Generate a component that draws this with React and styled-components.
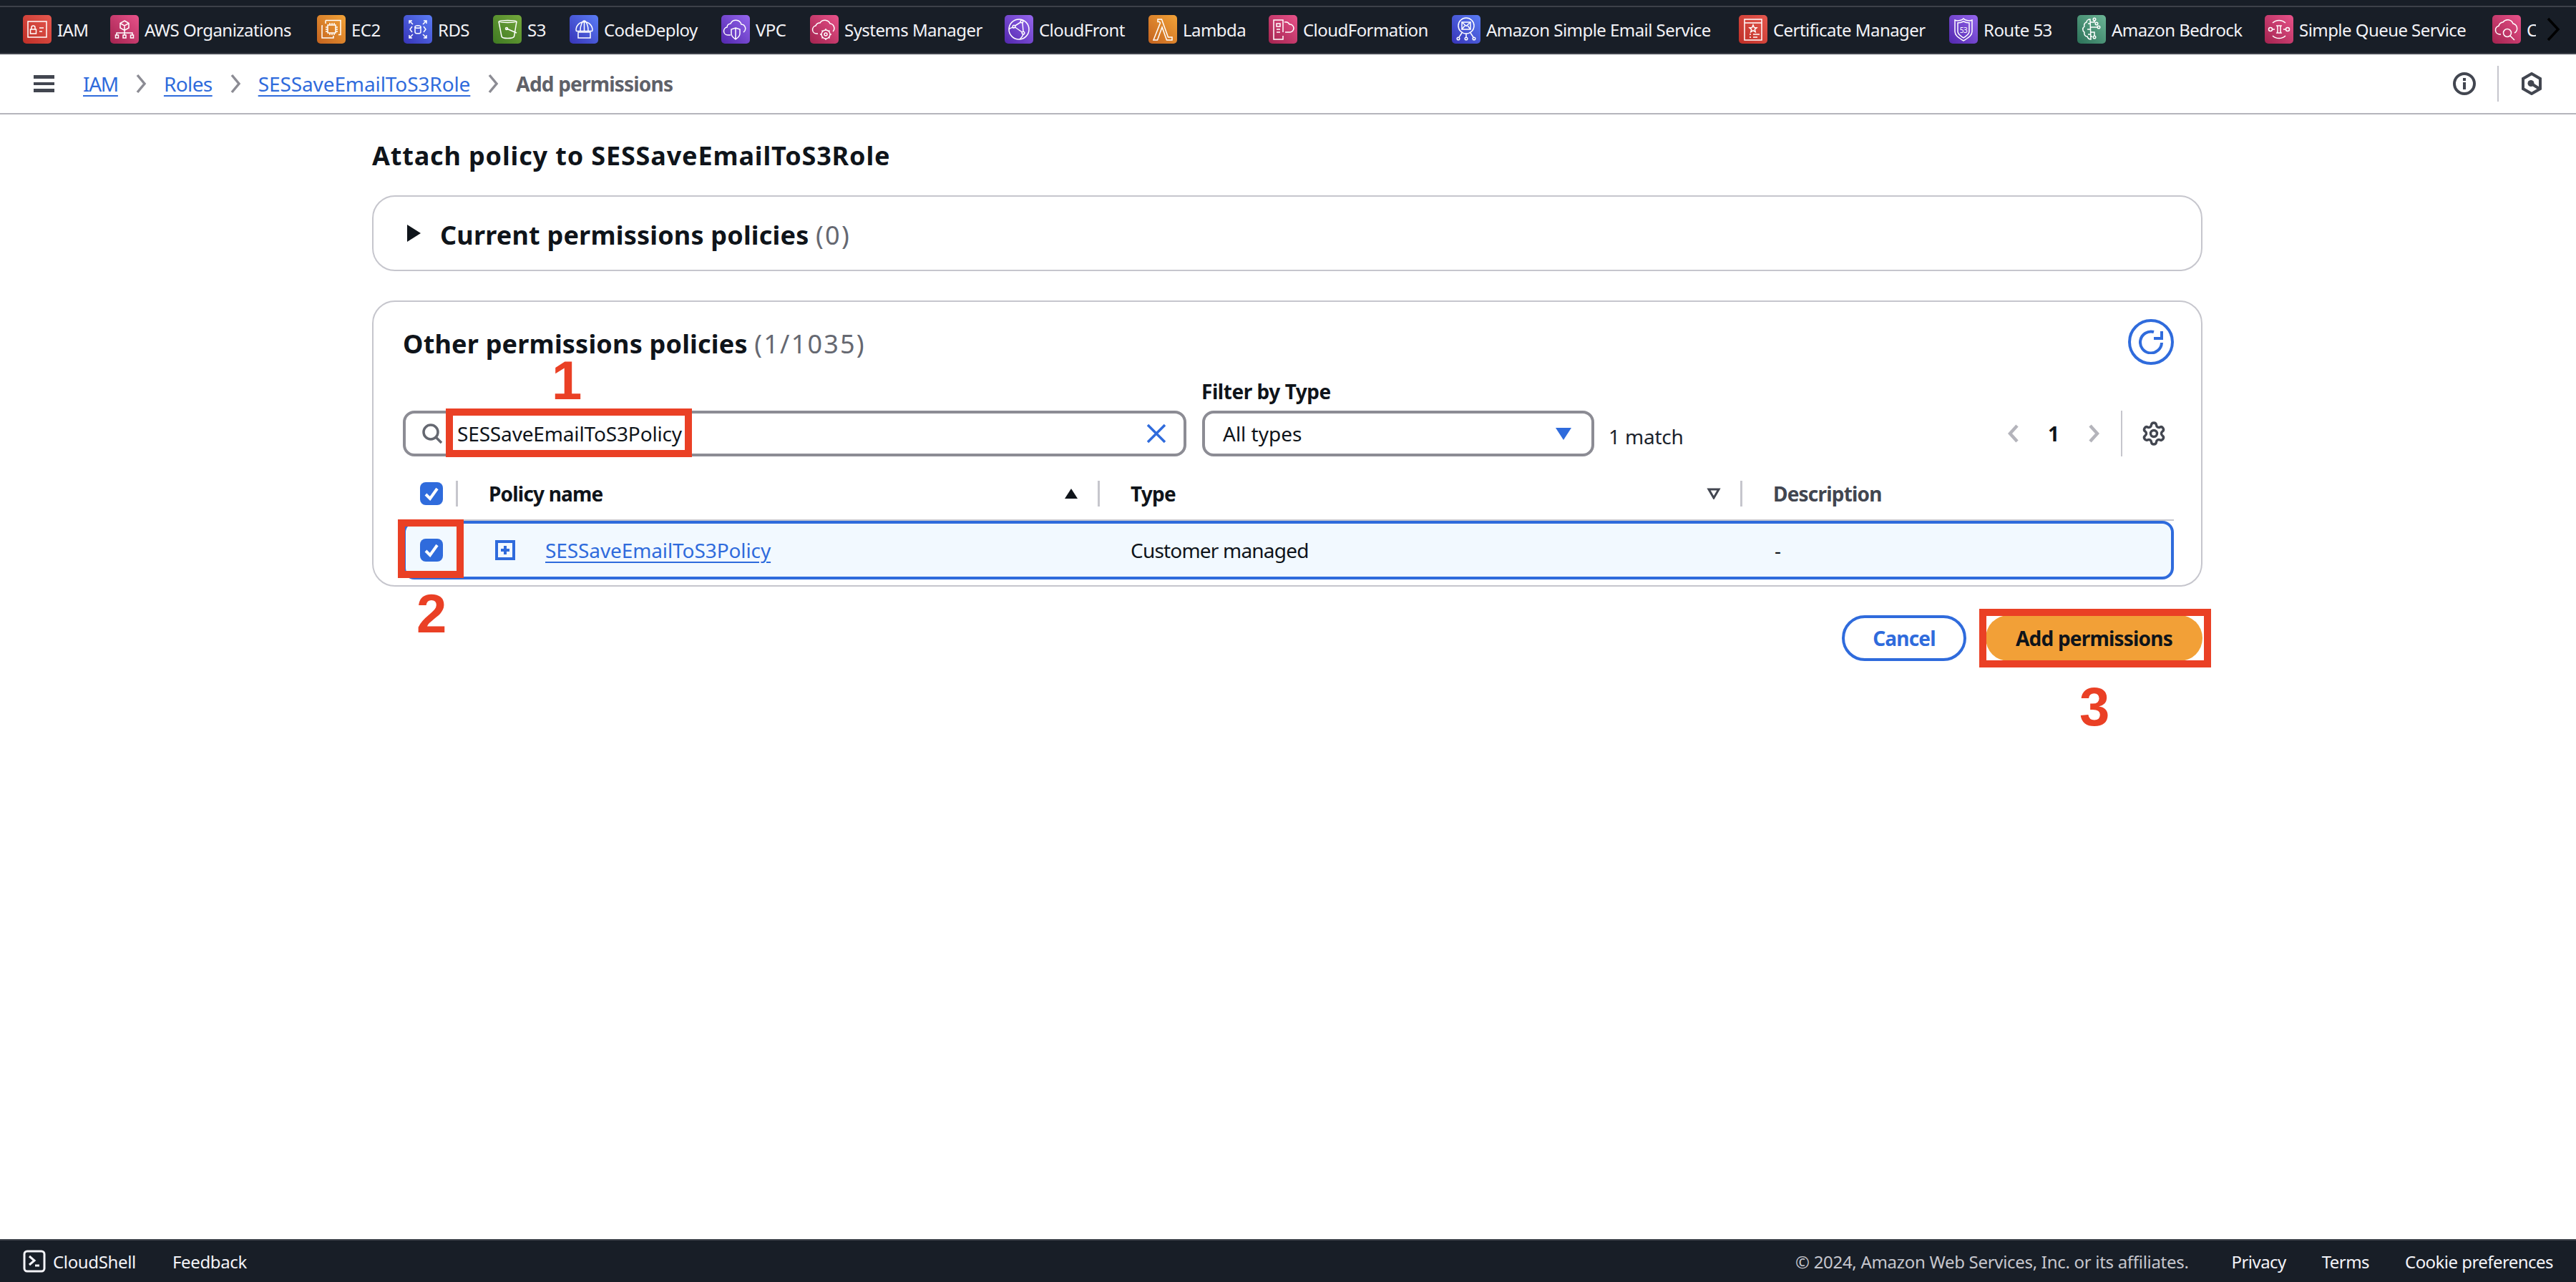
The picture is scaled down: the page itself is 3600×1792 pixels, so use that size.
import React from 'react';
import styled, { createGlobalStyle } from 'styled-components';
import { Settings } from 'lucide-react';

const GlobalStyle = createGlobalStyle`
  html, body { margin: 0; padding: 0; background: #fff; }
  * { box-sizing: border-box; }
  body { font-family: 'Noto Sans', Arial, sans-serif; color: #0f141a; }
`;

const BLUE = '#2f6bdc';

const Page = styled.div`
  width: 3600px;
  height: 1792px;
  display: flex;
  flex-direction: column;
  overflow: hidden;
  background: #fff;
`;

const ServicesBar = styled.div`
  height: 76px;
  flex: none;
  display: flex;
  align-items: center;
  padding: 8px 22px 0 32px;
  background: #181e27;
  border-bottom: 2px solid #41454d;
  position: relative;
  &::before {
    content: '';
    position: absolute;
    left: 0;
    right: 0;
    top: 8px;
    height: 2px;
    background: #3d4149;
  }
`;

const ServiceList = styled.div`
  flex: 1;
  display: flex;
  gap: 32px;
  overflow: hidden;
`;

const ServiceItem = styled.a`
  flex: none;
  width: ${(p) => p.$w}px;
  display: flex;
  align-items: center;
  gap: 8px;
  color: #f3f3f7;
  font-size: 24px;
  letter-spacing: -0.55px;
  white-space: nowrap;
  &:last-child {
    overflow: hidden;
  }
`;

const MoreChevron = styled.svg`
  width: 20px;
  height: 34px;
  flex: none;
  margin-left: 8px;
`;

const NavBar = styled.div`
  height: 84px;
  flex: none;
  display: flex;
  align-items: center;
  padding: 0 47px 0 47px;
  border-bottom: 2px solid #b4b4bb;
`;

const Hamburger = styled.div`
  width: 29px;
  height: 24px;
  margin-right: 40px;
  border-top: 5px solid #424650;
  border-bottom: 5px solid #424650;
  position: relative;
  &::after {
    content: '';
    position: absolute;
    left: 0;
    right: 0;
    top: 5px;
    height: 4px;
    background: #424650;
  }
`;

const Crumbs = styled.div`
  flex: 1;
  display: flex;
  align-items: center;
  font-size: 28px;
`;

const CrumbLink = styled.a`
  color: ${BLUE};
  letter-spacing: ${(p) => p.$track}px;
  text-decoration: underline;
  text-decoration-thickness: 2px;
  text-underline-offset: 5px;
`;

const CrumbSep = styled.svg`
  width: 16px;
  height: 28px;
  margin: 0 24px;
`;

const CrumbCurrent = styled.span`
  color: #5f6169;
  font-weight: 700;
  letter-spacing: -0.8px;
`;

const NavIcons = styled.div`
  display: flex;
  align-items: center;
`;

const NavDivider = styled.div`
  width: 2px;
  height: 50px;
  background: #c6c6cd;
  margin: 0 31px 0 30px;
`;

const Main = styled.main`
  flex: 1;
  width: 2558px;
  margin-left: 520px;
  padding-top: 35px;
`;

const PageTitle = styled.h1`
  margin: 0 0 34px;
  height: 44px;
  line-height: 46px;
  font-size: 36px;
  font-weight: 700;
  letter-spacing: 0.85px;
`;

const Card = styled.section`
  border: 2px solid #c6c6cd;
  border-radius: 32px;
  background: #fff;
`;

const CollapsedCard = styled(Card)`
  height: 106px;
  margin-bottom: 41px;
  display: flex;
  align-items: center;
  padding-left: 47px;
  gap: 27px;
`;

const Caret = styled.div`
  width: 0;
  height: 0;
  border-left: 19px solid #0f141a;
  border-top: 12px solid transparent;
  border-bottom: 12px solid transparent;
`;

const CardTitle = styled.h2`
  margin: 0;
  padding-top: 5px;
  font-size: 36px;
  line-height: 44px;
  font-weight: 700;
  letter-spacing: 0.2px;
  & > span {
    font-weight: 400;
    letter-spacing: 2.2px;
    color: #656871;
  }
`;

const PolicyCard = styled(Card)`
  height: 400px;
  padding: 24px 38px 0 41px;
`;

const CardHeader = styled.div`
  height: 64px;
  display: flex;
  align-items: center;
  justify-content: space-between;
`;

const RefreshButton = styled.div`
  width: 64px;
  height: 64px;
  border: 4px solid ${BLUE};
  border-radius: 50%;
  display: flex;
  align-items: center;
  justify-content: center;
`;

const Toolbar = styled.div`
  height: 128px;
  display: flex;
  align-items: flex-end;
`;

const Field = styled.div`
  height: 64px;
  border: 4px solid #8c8c94;
  border-radius: 16px;
  display: flex;
  align-items: center;
  background: #fff;
  position: relative;
`;

const SearchField = styled(Field)`
  width: 1095px;
  padding: 0 24px 0 22px;
`;

const SearchText = styled.span`
  flex: 1;
  margin-left: 20px;
  font-size: 28px;
  letter-spacing: -0.15px;
  position: relative;
  z-index: 2;
`;

const FilterGroup = styled.div`
  margin-left: 22px;
  width: 548px;
`;

const FilterLabel = styled.label`
  display: block;
  height: 40px;
  margin-left: -1px;
  font-size: 28px;
  font-weight: 700;
  letter-spacing: -0.45px;
  line-height: 26px;
`;

const SelectField = styled(Field)`
  justify-content: space-between;
  padding: 0 28px 0 25px;
  font-size: 28px;
  color: #0f141a;
`;

const SelectCaret = styled.div`
  width: 0;
  height: 0;
  border-top: 17px solid ${BLUE};
  border-left: 11px solid transparent;
  border-right: 11px solid transparent;
`;

const MatchCount = styled.span`
  margin: 0 0 10px 20px;
  height: 36px;
  line-height: 36px;
  font-size: 28px;
  letter-spacing: -0.2px;
  flex: 1;
  color: #1b232d;
`;

const Pager = styled.div`
  height: 64px;
  display: flex;
  align-items: center;
  padding-right: 10px;
`;

const PageNumber = styled.span`
  width: 96px;
  text-align: center;
  font-size: 28px;
  font-weight: 700;
`;

const PagerDivider = styled.div`
  width: 2px;
  height: 64px;
  background: #c6c6cd;
  margin: 0 26px 0 30px;
`;

const columns = (css) => `grid-template-columns: ${css};`;

const TableHead = styled.div`
  display: grid;
  ${columns('77px 897px 898px 603px')}
  margin-top: 34px;
  padding-bottom: 18px;
  border-bottom: 2px solid #c6c6cd;
`;

const HeadCell = styled.div`
  height: 36px;
  display: flex;
  align-items: center;
  justify-content: space-between;
  padding: 0 27px 0 43px;
  font-size: 28px;
  font-weight: 700;
  letter-spacing: -0.8px;
  color: ${(p) => (p.$muted ? '#424650' : '#0f141a')};
  border-right: ${(p) => (p.$last ? 'none' : '3px solid #c6c6cd')};
`;

const CheckHead = styled(HeadCell)`
  padding: 0 0 0 24px;
`;

const Checkbox = styled.span`
  width: 32px;
  height: 32px;
  border-radius: 8px;
  background: ${BLUE};
  display: flex;
  align-items: center;
  justify-content: center;
`;

const PolicyRow = styled.div`
  display: grid;
  ${columns('73px 897px 898px 599px')}
  height: 82px;
  align-items: center;
  border: 4px solid ${BLUE};
  border-radius: 16px;
  background: #f2f9ff;
  font-size: 28px;
  position: relative;
`;

const RowCell = styled.div`
  display: flex;
  align-items: center;
  padding-left: ${(p) => p.$pad}px;
`;

const TypeCell = styled(RowCell)`
  letter-spacing: -0.8px;
`;

const PolicyLink = styled.a`
  margin-left: 42px;
  color: ${BLUE};
  letter-spacing: -0.1px;
  text-decoration: underline;
  text-decoration-thickness: 2px;
  text-underline-offset: 5px;
`;

const Actions = styled.div`
  margin-top: 40px;
  display: flex;
  justify-content: flex-end;
  gap: 27px;
`;

const PillButton = styled.button`
  height: 64px;
  width: ${(p) => p.$w}px;
  border-radius: 32px;
  font-family: inherit;
  font-size: 28px;
  font-weight: 700;
  letter-spacing: -0.8px;
  padding: 0;
  position: relative;
  border: ${(p) => (p.$primary ? 'none' : `4px solid ${BLUE}`)};
  background: ${(p) => (p.$primary ? '#f2a037' : '#fff')};
  color: ${(p) => (p.$primary ? '#0f141a' : BLUE)};
`;

const CalloutBox = styled.div`
  position: absolute;
  left: ${(p) => p.$x}px;
  top: ${(p) => p.$y}px;
  width: ${(p) => p.$w}px;
  height: ${(p) => p.$h}px;
  border: 10px solid #ea4025;
  pointer-events: none;
  z-index: 1;
`;

const CalloutNumber = styled.div`
  position: absolute;
  left: ${(p) => p.$x}px;
  top: ${(p) => p.$y}px;
  font-family: 'Liberation Sans', Arial, sans-serif;
  font-size: 76px;
  font-weight: 700;
  line-height: 76px;
  letter-spacing: 0;
  color: #ea4025;
  z-index: 3;
`;

const Footer = styled.footer`
  height: 60px;
  flex: none;
  display: flex;
  align-items: center;
  padding: 0 32px;
  background: #181e27;
  border-top: 2px solid #41454d;
  color: #f3f3f7;
  font-size: 24px;
  letter-spacing: -0.35px;
`;

const FooterLeft = styled.div`
  flex: 1;
  display: flex;
  align-items: center;
`;

const CloudShell = styled.span`
  display: flex;
  align-items: center;
  gap: 10px;
  margin-right: 51px;
`;

const Copyright = styled.span`
  color: #c6c6cd;
  letter-spacing: -0.3px;
  margin-right: 60px;
`;

const FooterLinks = styled.div`
  display: flex;
  gap: 50px;
  letter-spacing: -0.55px;
`;

const grads = {
  red: ['#bf2f27', '#e5584f'],
  pink: ['#a3234f', '#e8528a'],
  orange: ['#c4631f', '#f2a338'],
  blue: ['#3734b8', '#5a7df5'],
  green: ['#3f7a22', '#74a83c'],
  purple: ['#5227ad', '#9566ee'],
  teal: ['#2b7158', '#6cb596'],
};

const glyphs = {
  iam: (
    <>
      <rect x="7" y="9" width="26" height="22" />
      <rect x="10.500" y="20" width="8" height="6" />
      <path d="M12 20v-2.500a2.500 2.500 0 0 1 5 0V20M23 18h6M23 23h4" />
    </>
  ),
  org: (
    <>
      <path d="M20 8l6 3.500v6.500l-6 3.500-6-3.500v-6.500zM14 11.500l6 3.500 6-3.500M20 15v6.500M20 21.500V28M9 28v-3h22v3" />
      <rect x="7.500" y="28" width="4" height="4" />
      <rect x="18" y="28" width="4" height="4" />
      <rect x="28.500" y="28" width="4" height="4" />
    </>
  ),
  ec2: (
    <>
      <rect x="15" y="14" width="11" height="11" />
      <path d="M18 14v-3M21 14v-3M24 14v-3M18 25v3M21 25v3M24 25v3M15 17h-3M15 20h-3M15 23h-3M26 17h3M26 20h3M26 23h3" />
      <path d="M12 7.500h21v20h-3M12 7.500V12M8 15H7v17h16v-3" />
    </>
  ),
  rds: (
    <>
      <ellipse cx="20" cy="16.500" rx="4" ry="1.800" />
      <path d="M16 16.500v7.500c0 1 1.800 1.800 4 1.800s4-.8 4-1.800v-7.500" />
      <path d="M8 12V8h4M8 8l5 5M32 12V8h-4M32 8l-5 5M8 28v4h4M8 32l5-5M32 28v4h-4M32 32l-5-5" />
      <path d="M12 16l-3 4 3 4M28 16l3 4-3 4" />
    </>
  ),
  s3: (
    <>
      <path d="M8 9c3-2 22-2 25 0M8 9c3 2 22 2 25 0" />
      <path d="M8 9l4 21c.4 2 4 2.500 8.500 2.500S29 32 29.500 30L33 9M19 19l14 6" />
      <circle cx="19" cy="19" r="1.500" />
    </>
  ),
  deploy: (
    <>
      <path d="M9 21a11.500 11.500 0 0 1 23 0l-.5 1.500H9.500zM15 22c0-8 3-14 5.500-14s5.500 6 5.500 14M20.500 8v14" />
      <path d="M12 24h17v8H12z" />
    </>
  ),
  vpc: (
    <>
      <path d="M13 28H9a5.500 5.500 0 0 1-1-10.900A5.500 5.500 0 0 1 13 12a8 8 0 0 1 15 1 6 6 0 0 1 3 11" />
      <path d="M20 18l6 2v6c0 4-3 6-6 8-3-2-6-4-6-8v-6zM20 18v16" />
    </>
  ),
  ssm: (
    <>
      <path d="M11 26H9a5.500 5.500 0 0 1-1-10.900A6 6 0 0 1 14 11a8 8 0 0 1 14 1 6.500 6.500 0 0 1 4 11" />
      <circle cx="22" cy="27" r="6" />
      <circle cx="22" cy="27" r="2" />
      <path d="M22 19v2M22 33v2M14 27h2M28 27h2M16.500 21.500l1.500 1.500M26 31l1.500 1.500M27.500 21.500L26 23M18 31l-1.500 1.500" />
    </>
  ),
  front: (
    <>
      <circle cx="20" cy="20" r="14" />
      <circle cx="13" cy="16" r="1.800" />
      <circle cx="24" cy="9" r="1.800" />
      <circle cx="26" cy="25" r="1.800" />
      <path d="M14.500 15l8-5M14.500 17l10 7M25 11l1 12M6 20c3-3 5-3 7-2M21 34c3-3 5-5 5-8" />
    </>
  ),
  lambda: <path d="M13 6h5.500l9 25H33v4h-7.500L19 17l-6.500 18H7l9.500-24-1-1.500H13z" />,
  formation: (
    <>
      <path d="M20 24V7H7v27h13v-5" />
      <path d="M11 12h5v4h-5zM11 20h5M11 24h5M22 10a6 6 0 0 1 7 3 5.500 5.500 0 0 1 1 11h-7" />
    </>
  ),
  ses: (
    <>
      <circle cx="20" cy="15" r="11" />
      <rect x="14" y="10" width="12" height="10" />
      <path d="M14 10l6 5.500 6-5.500M14 20l4-5M26 20l-4-5M20 26v5M14 25l-4 6M26 25l4 6" />
      <circle cx="9" cy="33" r="1.800" />
      <circle cx="20" cy="33" r="1.800" />
      <circle cx="31" cy="33" r="1.800" />
    </>
  ),
  acm: (
    <>
      <rect x="8" y="6" width="24" height="29" />
      <path d="M8 11h24M20 14l1.500 3.500 3.500.3-2.700 2.300.9 3.600-3.200-2-3.200 2 .9-3.600-2.700-2.300 3.500-.3zM15 27h2M20 27h9M15 31h2M20 31h6" />
    </>
  ),
  route: (
    <>
      <path d="M20 5c2 2 5 3 9 3l3-1v16c0 6-6 9-12 13C14 32 8 29 8 23V7l3 1c4 0 7-1 9-3z" />
      <path d="M20 9c2 1 4 2 8 2v12c0 4-4 6-8 9-4-3-8-5-8-9V11c4 0 6-1 8-2z" />
      <text x="20" y="25" fontSize="10" textAnchor="middle" fill="#fff" stroke="none" fontFamily="'Noto Sans', sans-serif">53</text>
    </>
  ),
  bedrock: (
    <>
      <path d="M18 6c-3 0-5 2-5 4-3 1-4 4-3 6-3 2-3 6 0 8-1 3 1 6 4 6 1 3 3 4 5 4zM18 12h-3M18 20h-4M18 27h-3" />
      <path d="M18 10h6v-3M18 17h10M18 24h6v5M18 30h3" />
      <circle cx="24" cy="6" r="1.800" />
      <circle cx="30" cy="17" r="1.800" />
      <circle cx="27" cy="12" r="1.800" />
      <circle cx="24" cy="31" r="1.800" />
    </>
  ),
  sqs: (
    <>
      <path d="M11 11a13 13 0 0 1 18 0M11 29a13 13 0 0 0 18 0" />
      <path d="M17 15h6l-1 2v6l1 2h-6l1-2v-6z" />
      <circle cx="8" cy="20" r="2.500" />
      <circle cx="32" cy="20" r="2.500" />
      <path d="M11 20h3M26 20h3" />
    </>
  ),
  watch: (
    <>
      <path d="M12 27H10a6 6 0 0 1-1-11.800A7 7 0 0 1 15 10a8 8 0 0 1 14 2 7 7 0 0 1 2 13" />
      <circle cx="21" cy="25" r="5.500" />
      <path d="M25 29l6 6" />
    </>
  ),
};

const services = [
  { label: 'IAM', w: 90, color: 'red', glyph: 'iam' },
  { label: 'AWS Organizations', w: 257, color: 'pink', glyph: 'org' },
  { label: 'EC2', w: 89, color: 'orange', glyph: 'ec2' },
  { label: 'RDS', w: 93, color: 'blue', glyph: 'rds' },
  { label: 'S3', w: 75, color: 'green', glyph: 's3' },
  { label: 'CodeDeploy', w: 180, color: 'blue', glyph: 'deploy' },
  { label: 'VPC', w: 92, color: 'purple', glyph: 'vpc' },
  { label: 'Systems Manager', w: 240, color: 'pink', glyph: 'ssm' },
  { label: 'CloudFront', w: 169, color: 'purple', glyph: 'front' },
  { label: 'Lambda', w: 136, color: 'orange', glyph: 'lambda' },
  { label: 'CloudFormation', w: 224, color: 'pink', glyph: 'formation' },
  { label: 'Amazon Simple Email Service', w: 369, color: 'blue', glyph: 'ses' },
  { label: 'Certificate Manager', w: 262, color: 'red', glyph: 'acm' },
  { label: 'Route 53', w: 147, color: 'purple', glyph: 'route' },
  { label: 'Amazon Bedrock', w: 230, color: 'teal', glyph: 'bedrock' },
  { label: 'Simple Queue Service', w: 286, color: 'pink', glyph: 'sqs' },
  { label: 'CloudWatch', w: 61, color: 'pink', glyph: 'watch' },
];

const ServiceIcon = ({ id, color, glyph }) => (
  <svg width="40" height="40" viewBox="0 0 40 40" style={{ flex: 'none' }}>
    <defs>
      <linearGradient id={id} x1="0" y1="1" x2="1" y2="0">
        <stop offset="0" stopColor={grads[color][0]} />
        <stop offset="1" stopColor={grads[color][1]} />
      </linearGradient>
    </defs>
    <rect width="40" height="40" rx="5" fill={`url(#${id})`} />
    <g fill="none" stroke="#fff" strokeWidth="1.500">{glyphs[glyph]}</g>
  </svg>
);

const Chevron = ({ color = '#8c8c94' }) => (
  <CrumbSep viewBox="0 0 16 28">
    <path d="M3 2l10 12L3 26" fill="none" stroke={color} strokeWidth="3.500" />
  </CrumbSep>
);

const CheckMark = () => (
  <svg width="22" height="20" viewBox="0 0 22 20">
    <path d="M3 11l6 6L19 3" fill="none" stroke="#fff" strokeWidth="4" />
  </svg>
);

const SortDown = ({ filled }) => (
  <svg width="20" height="16" viewBox="0 0 20 16">
    {filled ? (
      <path d="M10 1l9 14H1z" fill="#0f141a" />
    ) : (
      <path d="M3 2h14l-7 12z" fill="none" stroke="#424650" strokeWidth="3" />
    )}
  </svg>
);

export default function App() {
  return (
    <Page>
      <GlobalStyle />
      <ServicesBar>
        <ServiceList>
          {services.map((s, i) => (
            <ServiceItem key={s.label} $w={s.w}>
              <ServiceIcon id={`svc${i}`} color={s.color} glyph={s.glyph} />
              <span>{s.label}</span>
            </ServiceItem>
          ))}
        </ServiceList>
        <MoreChevron viewBox="0 0 20 34">
          <path d="M3 2l14 15L3 32" fill="none" stroke="#000" strokeWidth="3.500" />
        </MoreChevron>
      </ServicesBar>

      <NavBar>
        <Hamburger />
        <Crumbs>
          <CrumbLink $track={-1.3}>IAM</CrumbLink>
          <Chevron />
          <CrumbLink $track={-0.6}>Roles</CrumbLink>
          <Chevron />
          <CrumbLink $track={-0.1}>SESSaveEmailToS3Role</CrumbLink>
          <Chevron />
          <CrumbCurrent>Add permissions</CrumbCurrent>
        </Crumbs>
        <NavIcons>
          <svg width="32" height="32" viewBox="0 0 32 32">
            <circle cx="16" cy="16" r="14" fill="none" stroke="#424650" strokeWidth="4" />
            <path d="M16 14v10M16 8v4" stroke="#424650" strokeWidth="4" />
          </svg>
          <NavDivider />
          <svg width="30" height="32" viewBox="0 0 30 32">
            <path d="M15 2l12 7v14l-12 7-12-7V9z" fill="none" stroke="#424650" strokeWidth="4" />
            <circle cx="14" cy="15.500" r="4.500" fill="#424650" />
            <path d="M14 15.500l11 7" stroke="#424650" strokeWidth="4" />
          </svg>
        </NavIcons>
      </NavBar>

      <Main>
        <PageTitle>Attach policy to SESSaveEmailToS3Role</PageTitle>
        <CollapsedCard>
          <Caret />
          <CardTitle>
            Current permissions policies <span>(0)</span>
          </CardTitle>
        </CollapsedCard>

        <PolicyCard>
          <CardHeader>
            <CardTitle>
              Other permissions policies <span>(1/1035)</span>
            </CardTitle>
            <RefreshButton>
              <svg width="34" height="34" viewBox="0 0 34 34">
                <path d="M21 3A15 15 0 1 0 32 18" fill="none" stroke={BLUE} strokeWidth="4" />
                <path d="M32 2v10H21" fill="none" stroke={BLUE} strokeWidth="4" />
              </svg>
            </RefreshButton>
          </CardHeader>

          <Toolbar>
            <SearchField>
              <svg width="30" height="30" viewBox="0 0 30 30">
                <circle cx="13" cy="13" r="10" fill="none" stroke="#656871" strokeWidth="3.500" />
                <path d="M20 20l8 8" stroke="#656871" strokeWidth="3.500" />
              </svg>
              <SearchText>SESSaveEmailToS3Policy</SearchText>
              <svg width="28" height="28" viewBox="0 0 28 28">
                <path d="M2 2l24 24M26 2L2 26" stroke={BLUE} strokeWidth="3.500" />
              </svg>
              <CalloutBox $x={56} $y={-7} $w={344} $h={68} />
              <CalloutNumber $x={204} $y={-84}>1</CalloutNumber>
            </SearchField>
            <FilterGroup>
              <FilterLabel>Filter by Type</FilterLabel>
              <SelectField>
                All types
                <SelectCaret />
              </SelectField>
            </FilterGroup>
            <MatchCount>1 match</MatchCount>
            <Pager>
              <svg width="16" height="28" viewBox="0 0 16 28">
                <path d="M13 3L3 14l10 11" fill="none" stroke="#b4b4bb" strokeWidth="4.500" />
              </svg>
              <PageNumber>1</PageNumber>
              <svg width="16" height="28" viewBox="0 0 16 28">
                <path d="M3 3l10 11L3 25" fill="none" stroke="#b4b4bb" strokeWidth="4.500" />
              </svg>
              <PagerDivider />
              <Settings size={36} strokeWidth={2.300} color="#424650" />
            </Pager>
          </Toolbar>

          <TableHead>
            <CheckHead>
              <Checkbox><CheckMark /></Checkbox>
            </CheckHead>
            <HeadCell>
              Policy name
              <SortDown filled />
            </HeadCell>
            <HeadCell>
              Type
              <SortDown />
            </HeadCell>
            <HeadCell $last $muted>Description</HeadCell>
          </TableHead>

          <PolicyRow>
            <RowCell $pad={20}>
              <Checkbox><CheckMark /></Checkbox>
            </RowCell>
            <RowCell $pad={52}>
              <svg width="28" height="28" viewBox="0 0 28 28">
                <rect x="2" y="2" width="24" height="24" fill="none" stroke={BLUE} strokeWidth="4" />
                <path d="M14 8v12M8 14h12" stroke={BLUE} strokeWidth="4" />
              </svg>
              <PolicyLink>SESSaveEmailToS3Policy</PolicyLink>
            </RowCell>
            <TypeCell $pad={43}>Customer managed</TypeCell>
            <RowCell $pad={45}>-</RowCell>
            <CalloutBox $x={-11} $y={-6} $w={92} $h={82} />
            <CalloutNumber $x={15} $y={88}>2</CalloutNumber>
          </PolicyRow>
        </PolicyCard>

        <Actions>
          <PillButton $w={174}>Cancel</PillButton>
          <PillButton $w={303} $primary>
            Add permissions
            <CalloutBox $x={-9} $y={-9} $w={324} $h={82} />
            <CalloutNumber $x={131} $y={90}>3</CalloutNumber>
          </PillButton>
        </Actions>
      </Main>

      <Footer>
        <FooterLeft>
          <CloudShell>
            <svg width="32" height="32" viewBox="0 0 32 32">
              <rect x="2" y="2" width="28" height="28" rx="4" fill="none" stroke="#f3f3f7" strokeWidth="3" />
              <path d="M9 9l7 6-7 6M17 22h6" fill="none" stroke="#f3f3f7" strokeWidth="3" />
            </svg>
            CloudShell
          </CloudShell>
          Feedback
        </FooterLeft>
        <Copyright>© 2024, Amazon Web Services, Inc. or its affiliates.</Copyright>
        <FooterLinks>
          <span>Privacy</span>
          <span>Terms</span>
          <span>Cookie preferences</span>
        </FooterLinks>
      </Footer>
    </Page>
  );
}
